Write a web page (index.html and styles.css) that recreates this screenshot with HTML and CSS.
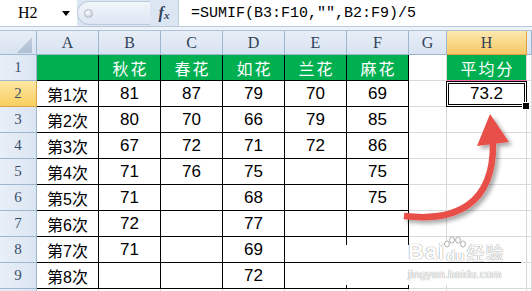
FILE: index.html
```html
<!DOCTYPE html>
<html lang="zh-CN">
<head>
    <meta charset="UTF-8">
    <meta name="viewport" content="width=device-width, initial-scale=1.0">
    <title>SUMIF 平均分</title>
    <link rel="stylesheet" href="styles.css">
</head>
<body>
    <!-- 编辑栏 -->
    <div class="formula-bar">
        <div class="name-box"><span>H2</span><i class="caret"></i></div>
        <div class="knob"><div class="pill"><i class="dot"></i></div></div>
        <div class="fx"><i>f</i><span>x</span></div>
        <div class="formula">=SUMIF(B3:F10,"",B2:F9)/5</div>
    </div>
    <div class="strip"></div>

    <!-- 表格 -->
    <div class="sheet">
        <div class="row head">
            <div class="corner"><i></i></div>
            <div>A</div><div>B</div><div>C</div><div>D</div><div>E</div><div>F</div><div>G</div>
            <div class="on">H</div><div></div>
        </div>
        <div class="row">
            <div class="rh">1</div>
            <div class="tb green"></div>
            <div class="tb green">秋花</div>
            <div class="tb green">春花</div>
            <div class="tb green">如花</div>
            <div class="tb green">兰花</div>
            <div class="tb green">麻花</div>
            <div></div>
            <div class="green h1">平均分</div>
            <div></div>
        </div>
        <div class="row">
            <div class="rh on">2</div>
            <div class="tb cn">第1次</div>
            <div class="tb">81</div><div class="tb">87</div><div class="tb">79</div><div class="tb">70</div><div class="tb">69</div>
            <div></div>
            <div class="sel">73.2</div>
            <div></div>
        </div>
        <div class="row">
            <div class="rh">3</div>
            <div class="tb cn">第2次</div>
            <div class="tb">80</div><div class="tb">70</div><div class="tb">66</div><div class="tb">79</div><div class="tb">85</div>
            <div></div><div></div><div></div>
        </div>
        <div class="row">
            <div class="rh">4</div>
            <div class="tb cn">第3次</div>
            <div class="tb">67</div><div class="tb">72</div><div class="tb">71</div><div class="tb">72</div><div class="tb">86</div>
            <div></div><div></div><div></div>
        </div>
        <div class="row">
            <div class="rh">5</div>
            <div class="tb cn">第4次</div>
            <div class="tb">71</div><div class="tb">76</div><div class="tb">75</div><div class="tb"></div><div class="tb">75</div>
            <div></div><div></div><div></div>
        </div>
        <div class="row">
            <div class="rh">6</div>
            <div class="tb cn">第5次</div>
            <div class="tb">71</div><div class="tb"></div><div class="tb">68</div><div class="tb"></div><div class="tb">75</div>
            <div></div><div></div><div></div>
        </div>
        <div class="row">
            <div class="rh">7</div>
            <div class="tb cn">第6次</div>
            <div class="tb">72</div><div class="tb"></div><div class="tb">77</div><div class="tb"></div><div class="tb"></div>
            <div></div><div></div><div></div>
        </div>
        <div class="row">
            <div class="rh">8</div>
            <div class="tb cn">第7次</div>
            <div class="tb">71</div><div class="tb"></div><div class="tb">69</div><div class="tb"></div><div class="tb"></div>
            <div></div><div></div><div></div>
        </div>
        <div class="row">
            <div class="rh">9</div>
            <div class="tb cn">第8次</div>
            <div class="tb"></div><div class="tb"></div><div class="tb">72</div><div class="tb"></div><div class="tb"></div>
            <div></div><div></div><div></div>
        </div>
        <div class="row">
            <div class="rh"></div>
            <div></div><div></div><div></div><div></div><div></div><div></div><div></div><div></div><div></div>
        </div>
    </div>

    <!-- 水印 -->
    <div class="watermark">
        <i class="wm-line"></i>
        <div class="wm-logo">
            <span class="wm-bai">Bai</span>
            <span class="wm-du">
                <svg class="paw" width="22" height="12" viewBox="0 0 22 12">
                    <ellipse cx="3" cy="8" rx="2.4" ry="3" />
                    <ellipse cx="8" cy="4" rx="2.4" ry="3.2" />
                    <ellipse cx="14" cy="4" rx="2.4" ry="3.2" />
                    <ellipse cx="19" cy="8" rx="2.4" ry="3" />
                </svg>
                du
            </span>
            <span class="wm-cn">经验</span>
        </div>
        <div class="wm-url">jingyan.baidu.com</div>
    </div>

    <!-- 箭头 -->
    <svg class="arrow" width="532" height="291" viewBox="0 0 532 291">
        <defs>
            <filter id="shadow" x="-30%" y="-30%" width="160%" height="160%">
                <feDropShadow dx="3" dy="3" stdDeviation="2" flood-color="#000" flood-opacity="0.35" />
            </filter>
        </defs>
        <g filter="url(#shadow)">
            <path d="M404 216 C455 222 494 205 493 143" fill="none" stroke="#e8504a" stroke-width="6.5" />
            <polygon points="477,146 490,114 509,142" fill="#e8504a" />
        </g>
    </svg>
</body>
</html>
```

FILE: styles.css
```css
*{
    margin: 0;
    padding: 0;
    box-sizing: border-box;
}
body{
    width: 532px;
    height: 291px;
    overflow: hidden;
    position: relative;
    background-color: #fff;
    font-family: "Liberation Sans", "Noto Sans CJK SC", sans-serif;
}
/* 编辑栏 */
.formula-bar{
    display: flex;
    height: 27px;
    background-color: #dce6f3;
    border-bottom: 1px solid #b9c8da;
}
.name-box{
    width: 77px;
    display: flex;
    align-items: center;
    padding-left: 18px;
    background-color: #fff;
    font: 16px "Liberation Serif", serif;
    color: #000;
}
.caret{
    margin-left: auto;
    margin-right: 7px;
    border-left: 4px solid transparent;
    border-right: 4px solid transparent;
    border-top: 5px solid #000;
}
.knob{
    width: 73px;
    display: flex;
    align-items: center;
}
.knob .pill{
    width: 100%;
    height: 24px;
    display: flex;
    align-items: center;
    padding-left: 6px;
    border: 1px solid #bccadb;
    border-right: 0;
    border-radius: 12px 0 0 12px;
    background: linear-gradient(#f2f6fb, #dde6f2);
}
.dot{
    width: 9px;
    height: 9px;
    border-radius: 50%;
    border: 1px solid #b2bbc7;
    background: radial-gradient(circle at 40% 35%, #fff, #bcc4ce);
}
.fx{
    width: 28px;
    display: flex;
    align-items: center;
    justify-content: center;
    font: italic bold 16px "Liberation Serif", serif;
    color: #34445a;
}
.fx span{
    font-size: 11px;
    margin-top: 4px;
}
.formula{
    flex: 1;
    display: flex;
    align-items: center;
    padding-left: 12px;
    background-color: #fff;
    border-left: 1px solid #c2cfde;
    font: 15px "Liberation Mono", monospace;
    color: #000;
}
.strip{
    height: 4px;
    background-color: #eef3f9;
    border-bottom: 1px solid #b0c1d6;
}
/* 表格 */
.row{
    display: grid;
    grid-template-columns: 37px 62px 62px 62px 62px 62px 62px 38px 80px 1fr;
    height: 26px;
}
.row.head{
    height: 24px;
}
.row > div{
    display: flex;
    align-items: center;
    justify-content: center;
    border-right: 1px solid #d9d9d9;
    border-bottom: 1px solid #d9d9d9;
    font-size: 17px;
    color: #000;
}
.row.head > div{
    background: linear-gradient(#e8eef7, #d8e3f1);
    border-color: #9eb6ce;
    color: #2f4259;
    font: 16px "Liberation Serif", serif;
}
.row.head > .on{
    background: linear-gradient(#fce8ae, #f6c865);
    border-color: #e0a448;
}
.row.head > .corner{
    justify-content: flex-end;
    align-items: flex-end;
    padding: 0 4px 1px 0;
}
.corner i{
    width: 15px;
    height: 16px;
    background: linear-gradient(#c3d0e0, #aebfd4);
    clip-path: polygon(100% 0, 100% 100%, 0 100%);
}
.row > .rh{
    background: linear-gradient(90deg, #e9eff8, #dbe5f2);
    border-color: #9eb6ce;
    color: #3b4e69;
    font: 15px "Liberation Serif", serif;
}
.row > .rh.on{
    background: linear-gradient(#fde7a4, #f9cf5f);
    border-color: #e0a448;
}
.row > .tb{
    border-color: #000;
}
.row > .cn{
    font-size: 16px;
}
.row > .green{
    background-color: #00b050;
    color: #fff;
    font-size: 16px;
    letter-spacing: 2px;
    padding-left: 2px;
}
.row > .h1{
    border-bottom-color: #f06aa6;
}
.row > .sel{
    position: relative;
}
.sel::after{
    content: '';
    position: absolute;
    top: 0;
    left: -1px;
    right: -1px;
    bottom: -1px;
    border: 3px double #000;
}
.sel::before{
    content: '';
    position: absolute;
    right: -4px;
    bottom: -4px;
    width: 6px;
    height: 6px;
    background-color: #000;
    border: 1px solid #fff;
    z-index: 1;
}
/* 水印 */
.watermark{
    position: absolute;
    left: 290px;
    top: 245px;
    width: 231px;
    height: 40px;
    padding-left: 118px;
    background-color: #fff;
    color: #fff;
    text-shadow: 0 0 1px #9a9a9a, 0 0 1px #9a9a9a;
}
.wm-line{
    position: absolute;
    left: -5px;
    right: 0;
    top: 17px;
    height: 1px;
    background-color: #000;
}
.wm-logo{
    display: flex;
    align-items: flex-end;
    height: 18px;
    line-height: 1;
    font-weight: bold;
}
.wm-bai{
    font-size: 22px;
    letter-spacing: 1px;
}
.wm-du{
    position: relative;
    font-size: 15px;
    margin: 0 2px 0 1px;
}
.paw{
    position: absolute;
    left: -2px;
    top: -12px;
    fill: #fff;
    stroke: #b0b0b0;
    stroke-width: 1;
}
.wm-cn{
    font-size: 18px;
    font-weight: normal;
    letter-spacing: 1px;
}
.wm-url{
    margin-top: 5px;
    font-size: 11px;
    letter-spacing: 0.3px;
}
/* 箭头 */
.arrow{
    position: absolute;
    left: 0;
    top: 0;
    pointer-events: none;
}
```
